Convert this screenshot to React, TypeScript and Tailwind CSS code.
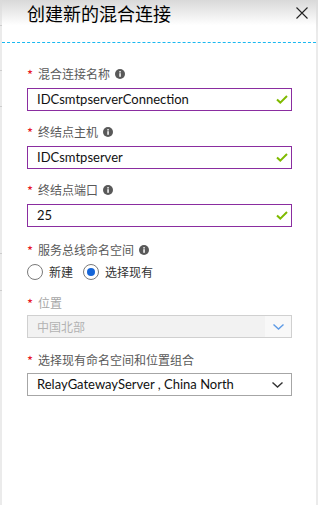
import React, { useState } from 'react';

const cjk = { fontFamily: '"Noto Sans CJK SC", "Noto Sans", sans-serif' };
const latin = { fontFamily: 'Lato, "Noto Sans CJK SC", sans-serif' };

const InfoIcon: React.FC = () => (
  <svg width="10" height="10" viewBox="0 0 10 10" className="ml-[5px] shrink-0">
    <circle cx="5" cy="5" r="5" fill="#595959" />
    <rect x="4.3" y="4.2" width="1.5" height="3.6" fill="#fff" />
    <rect x="4.3" y="2.1" width="1.5" height="1.4" fill="#fff" />
  </svg>
);

const Check: React.FC = () => (
  <svg width="12" height="9" viewBox="0 0 12 9" className="shrink-0">
    <path d="M1 4.5 L4.3 7.6 L11 1" fill="none" stroke="#7fba00" strokeWidth="2" />
  </svg>
);

const Chevron: React.FC<{ color: string }> = ({ color }) => (
  <svg width="11" height="6" viewBox="0 0 11 6" className="shrink-0">
    <path d="M0.5 0.5 L5.5 5 L10.5 0.5" fill="none" stroke={color} strokeWidth="1.4" />
  </svg>
);

const Label: React.FC<{ text: string; info?: boolean; muted?: boolean }> = ({ text, info, muted }) => (
  <div className="flex items-center h-5 text-[12px]" style={cjk}>
    <span className="text-[#e81123] text-[13px] w-[11px] leading-none">*</span>
    <span className={muted ? 'text-[#a6a6a6]' : 'text-[#595959]'}>{text}</span>
    {info && <InfoIcon />}
  </div>
);

const TextField: React.FC<{ value: string }> = ({ value }) => (
  <div className="mt-1 h-[23px] border border-[#8a2da0] flex items-center pl-[9px] pr-[3px]">
    <span className="flex-1 text-[13px] text-[#111]" style={latin}>{value}</span>
    <Check />
  </div>
);

const Radio: React.FC<{ checked: boolean; label: string; onClick: () => void }> = ({ checked, label, onClick }) => (
  <button onClick={onClick} className="flex items-center mr-[10px]">
    <span className="w-4 h-4 rounded-full border border-[#7a7a7a] flex items-center justify-center bg-white">
      {checked && <span className="w-2 h-2 rounded-full bg-[#1565d8]" />}
    </span>
    <span className="ml-[6px] text-[12px] text-[#333]" style={cjk}>{label}</span>
  </button>
);

export default function App() {
  const [mode, setMode] = useState<'new' | 'existing'>('existing');

  return (
    <div className="w-[318px] h-[505px] flex bg-white overflow-hidden">
      {/* blade behind, left edge */}
      <div className="w-[2px] flex flex-col bg-[#ebebeb]">
        <div className="h-[25px] bg-gradient-to-b from-[#dadada] to-[#ebebeb]" />
        <div className="h-px bg-[#cdcdcd]" />
        <div className="h-[44px]" />
        <div className="h-px bg-[#cdcdcd]" />
        <div className="h-[35px]" />
        <div className="h-px bg-[#cdcdcd]" />
        <div className="h-[146px]" />
        <div className="h-px bg-[#cdcdcd]" />
        <div className="h-[36px]" />
        <div className="h-px bg-[#cdcdcd]" />
      </div>

      <div className="flex-1 flex flex-col">
        {/* header */}
        <div className="h-[42px] flex items-start justify-between bg-gradient-to-b from-[#d9d9d9] via-white via-60% to-white pl-[25px] pr-[8px]">
          <h1 className="text-[18px] leading-[27px] text-black" style={cjk}>创建新的混合连接</h1>
          <button className="mt-[7px] mr-0">
            <svg width="12" height="12" viewBox="0 0 12 12">
              <path d="M0.5 0.5 L11.5 11.5 M11.5 0.5 L0.5 11.5" stroke="#222" strokeWidth="1.1" />
            </svg>
          </button>
        </div>
        <div className="border-t border-dashed border-[#1ab8f0]" />

        {/* form */}
        <div className="pl-[25px] pr-[24px] pt-[21px]">
          <Label text="混合连接名称" info />
          <TextField value="IDCsmtpserverConnection" />

          <div className="mt-[11px]">
            <Label text="终结点主机" info />
            <TextField value="IDCsmtpserver" />
          </div>

          <div className="mt-[11px]">
            <Label text="终结点端口" info />
            <TextField value="25" />
          </div>

          <div className="mt-[13px]">
            <Label text="服务总线命名空间" info />
            <div className="mt-[4px] flex items-center h-4">
              <Radio checked={mode === 'new'} label="新建" onClick={() => setMode('new')} />
              <Radio checked={mode === 'existing'} label="选择现有" onClick={() => setMode('existing')} />
            </div>
          </div>

          <div className="mt-[13px]">
            <Label text="位置" muted />
            <div className="mt-[2px] h-[23px] border border-[#d0d0d0] bg-[#f2f2f2] flex items-center">
              <span className="flex-1 pl-[9px] text-[12px] text-[#b3b3b3]" style={cjk}>中国北部</span>
              <span className="w-[26px] h-full bg-[#f8f8f8] flex items-center justify-center">
                <Chevron color="#5e9be6" />
              </span>
            </div>
          </div>

          <div className="mt-[12px]">
            <Label text="选择现有命名空间和位置组合" />
            <div className="mt-[3px] h-[23px] border border-[#a6a6a6] flex items-center pl-[9px] pr-[8px]">
              <span className="flex-1 text-[13px] text-[#111]" style={latin}>RelayGatewayServer , China North</span>
              <Chevron color="#333" />
            </div>
          </div>
        </div>
      </div>

      {/* right edge */}
      <div className="w-[2px] flex flex-col bg-[#ebebeb]">
        <div className="h-[33px] bg-gradient-to-b from-[#dadada] to-[#ebebeb]" />
      </div>
    </div>
  );
}
